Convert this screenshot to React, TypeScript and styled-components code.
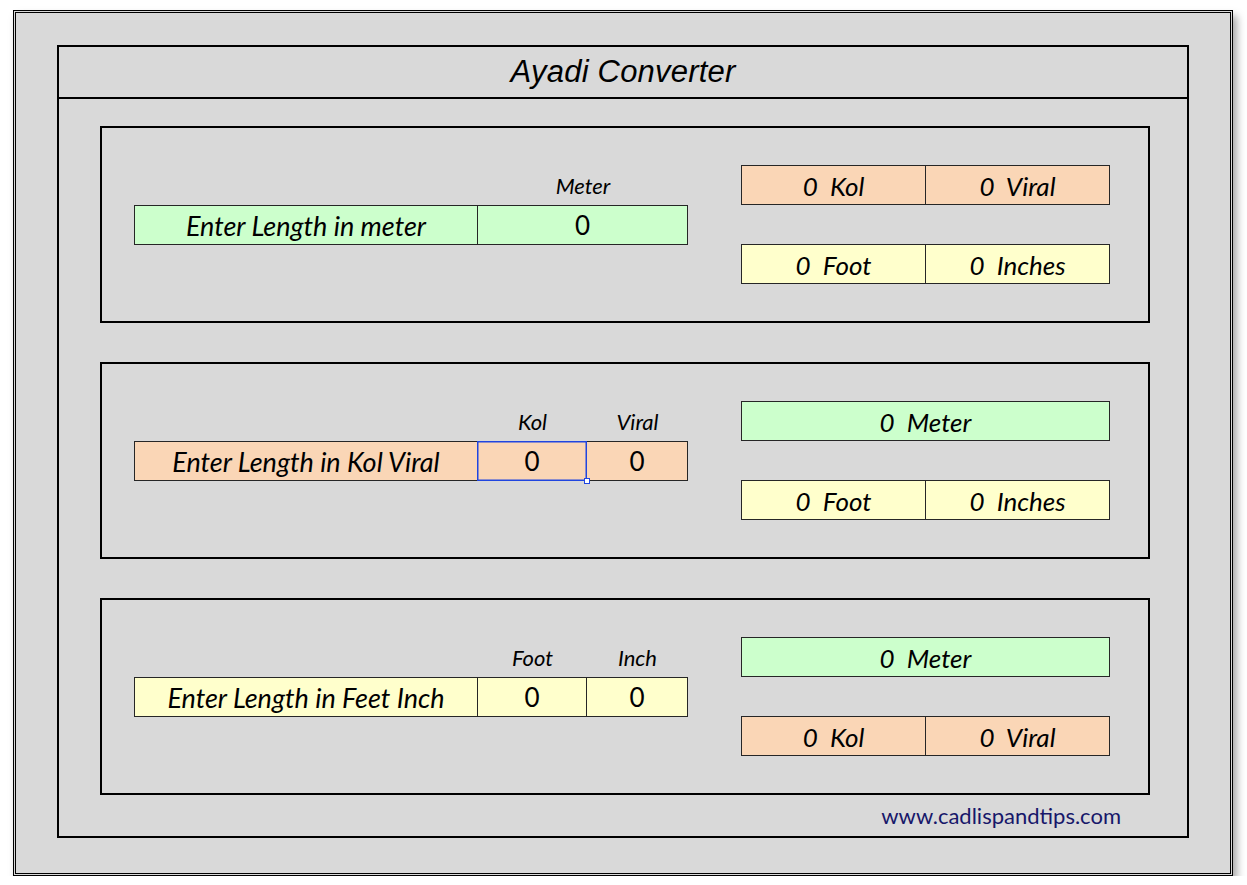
import React from "react";
import styled, { createGlobalStyle } from "styled-components";

type Tone = "green" | "peach" | "yellow";

const tones: Record<Tone, string> = {
  green: "#ccffcc",
  peach: "#fad6b6",
  yellow: "#ffffcc",
};

const GlobalStyle = createGlobalStyle`
  html, body {
    margin: 0;
    padding: 0;
    background: #ffffff;
  }
  body {
    font-family: "Lato", "Open Sans", sans-serif;
    color: #000;
  }
`;

const Sheet = styled.div`
  box-sizing: border-box;
  width: 1220px;
  height: 866px;
  margin: 10px 0 0 13px;
  padding: 32px 41px 0 41px;
  background: #d9d9d9;
  border: 3px double #000;
  box-shadow: 4px 6px 8px rgba(0, 0, 0, 0.35);
`;

const Frame = styled.div`
  box-sizing: border-box;
  width: 1132px;
  height: 793px;
  border: 2px solid #000;
  display: flex;
  flex-direction: column;
`;

const TitleBar = styled.div`
  height: 50px;
  border-bottom: 2px solid #000;
  display: flex;
  align-items: center;
  justify-content: center;
`;

const Title = styled.h1`
  margin: 0;
  font-family: "Liberation Sans", Arial, sans-serif;
  font-style: italic;
  font-weight: 400;
  font-size: 31px;
  letter-spacing: 0.2px;
`;

const Sections = styled.div`
  display: flex;
  flex-direction: column;
  gap: 39px;
  padding: 27px 0 0 41px;
`;

const Section = styled.section`
  box-sizing: border-box;
  width: 1050px;
  height: 197px;
  border: 2px solid #000;
  display: flex;
  align-items: center;
  padding-left: 32px;
  gap: 53px;
`;

const InputGrid = styled.div<{ $cols: string }>`
  display: grid;
  grid-template-columns: ${(p) => p.$cols};
  grid-template-rows: 40px 40px;
  padding-bottom: 40px;
`;

const Head = styled.div`
  display: flex;
  align-items: center;
  justify-content: center;
  font-style: italic;
  font-size: 22px;
  padding-top: 1px;
`;

const Cell = styled.div<{ $tone: Tone; $first?: boolean; $italic?: boolean }>`
  position: relative;
  box-sizing: border-box;
  height: 40px;
  display: flex;
  align-items: center;
  justify-content: center;
  background: ${(p) => tones[p.$tone]};
  border: 1px solid #262626;
  border-left: ${(p) => (p.$first ? "1px solid #262626" : "none")};
  font-size: 26px;
  font-style: ${(p) => (p.$italic ? "italic" : "normal")};
  white-space: pre;
  padding-top: 1px;
`;

const LabelCell = styled(Cell)`
  font-size: 27px;
`;

const Selected = styled.div`
  position: absolute;
  z-index: 2;
  inset: -1px -1px -1px -1px;
  border: 1px solid #1f45e0;
  box-shadow: inset 0 0 0 0.5px #1f45e0;
  pointer-events: none;
  &::after {
    content: "";
    position: absolute;
    right: -4px;
    bottom: -4px;
    width: 4px;
    height: 4px;
    background: #fff;
    border: 1px solid #1f45e0;
  }
`;

const Outputs = styled.div`
  display: flex;
  flex-direction: column;
  gap: 39px;
  width: 369px;
`;

const OutRow = styled.div`
  display: flex;
  & > div {
    flex: 1;
  }
`;

const Footer = styled.div`
  height: 41px;
  display: flex;
  align-items: center;
  justify-content: flex-end;
  padding-right: 66px;
`;

const Site = styled.span`
  font-family: "Lato", "Open Sans", sans-serif;
  font-size: 22px;
  color: #17176a;
`;

type Input = { head: string; width: number; selected?: boolean };
type Out = { text: string; tone: Tone };

const sections: {
  label: string;
  tone: Tone;
  inputs: Input[];
  outputs: Out[][];
}[] = [
  {
    label: "Enter Length in meter",
    tone: "green",
    inputs: [{ head: "Meter", width: 210 }],
    outputs: [
      [
        { text: "0  Kol", tone: "peach" },
        { text: "0  Viral", tone: "peach" },
      ],
      [
        { text: "0  Foot", tone: "yellow" },
        { text: "0  Inches", tone: "yellow" },
      ],
    ],
  },
  {
    label: "Enter Length in Kol Viral",
    tone: "peach",
    inputs: [
      { head: "Kol", width: 109, selected: true },
      { head: "Viral", width: 101 },
    ],
    outputs: [
      [{ text: "0  Meter", tone: "green" }],
      [
        { text: "0  Foot", tone: "yellow" },
        { text: "0  Inches", tone: "yellow" },
      ],
    ],
  },
  {
    label: "Enter Length in Feet Inch",
    tone: "yellow",
    inputs: [
      { head: "Foot", width: 109 },
      { head: "Inch", width: 101 },
    ],
    outputs: [
      [{ text: "0  Meter", tone: "green" }],
      [
        { text: "0  Kol", tone: "peach" },
        { text: "0  Viral", tone: "peach" },
      ],
    ],
  },
];

const App = () => {
  return (
    <>
      <GlobalStyle />
      <Sheet>
        <Frame>
          <TitleBar>
            <Title>Ayadi Converter</Title>
          </TitleBar>
          <Sections>
            {sections.map((s) => (
              <Section key={s.label}>
                <InputGrid
                  $cols={["344px", ...s.inputs.map((i) => `${i.width}px`)].join(" ")}
                >
                  <div />
                  {s.inputs.map((i) => (
                    <Head key={i.head}>{i.head}</Head>
                  ))}
                  <LabelCell $tone={s.tone} $first $italic>
                    {s.label}
                  </LabelCell>
                  {s.inputs.map((i) => (
                    <Cell key={i.head} $tone={s.tone}>
                      0{i.selected && <Selected />}
                    </Cell>
                  ))}
                </InputGrid>
                <Outputs>
                  {s.outputs.map((row, r) => (
                    <OutRow key={r}>
                      {row.map((o, c) => (
                        <Cell key={c} $tone={o.tone} $first={c === 0} $italic>
                          {o.text}
                        </Cell>
                      ))}
                    </OutRow>
                  ))}
                </Outputs>
              </Section>
            ))}
          </Sections>
          <Footer>
            <Site>www.cadlispandtips.com</Site>
          </Footer>
        </Frame>
      </Sheet>
    </>
  );
};

export default App;
